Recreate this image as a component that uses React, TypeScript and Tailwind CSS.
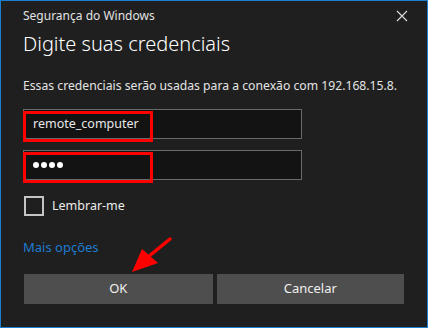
import React from "react";

function CloseIcon() {
  return (
    <svg width="12" height="12" viewBox="0 0 12 12" className="block">
      <path d="M1 1 L11 11 M11 1 L1 11" stroke="#d8d8d8" strokeWidth="1.2" />
    </svg>
  );
}

function Field({ children }: { children: React.ReactNode }) {
  return (
    <div className="relative w-[279px] h-[30px] bg-[#131313] border border-[#6a6a6a] flex items-center pl-[9px]">
      {children}
      {/* red highlight annotation */}
      <div className="absolute top-[1px] left-[-1px] w-[130px] h-[31px] border-[3px] border-[#ff0000]" />
    </div>
  );
}

export default function App() {
  return (
    <div
      className="relative w-[428px] h-[328px] bg-[#1f1f1f] border border-[#1b80d4] text-[#ececec] overflow-hidden"
      style={{ fontFamily: '"Noto Sans", "Open Sans", sans-serif' }}
    >
      <div className="pl-[22px] pr-[23px]">
        {/* title bar */}
        <div className="flex items-center justify-between mt-[7px] h-[16px]">
          <span className="text-[12px] leading-[16px] text-[#e2e2e2]">Segurança do Windows</span>
          <div className="mr-[-4px]">
            <CloseIcon />
          </div>
        </div>

        <div className="mt-[6px] text-[20px] leading-[28px] text-white font-light">Digite suas credenciais</div>

        <div className="mt-[20px] text-[12.2px] leading-[16px] text-[#e4e4e4]">
          Essas credenciais serão usadas para a conexão com 192.168.15.8.
        </div>

        <div className="mt-[15px]">
          <Field>
            <span className="text-[12.5px] text-[#e8e8e8]">remote_computer</span>
          </Field>
        </div>

        <div className="mt-[11px]">
          <Field>
            <span className="flex gap-[2px]">
              <span className="w-[6px] h-[6px] rounded-full bg-white" />
              <span className="w-[6px] h-[6px] rounded-full bg-white" />
              <span className="w-[6px] h-[6px] rounded-full bg-white" />
              <span className="w-[6px] h-[6px] rounded-full bg-white" />
            </span>
          </Field>
        </div>

        <div className="mt-[16px] flex items-center gap-[8px]">
          <div className="w-[20px] h-[20px] border-2 border-[#c4c4c4] ml-[1px]" />
          <span className="text-[12.5px] leading-[18px] text-[#ececec]">Lembrar-me</span>
        </div>

        <div className="mt-[22px] text-[13px] leading-[18px] text-[#1e7bd0]">Mais opções</div>

        <div className="mt-[18px] flex gap-[4px] ml-[1px]">
          <div className="w-[189px] h-[30px] bg-[#4e4e4e] flex items-center justify-center text-[13px] text-[#f0f0f0]">
            OK
          </div>
          <div className="w-[188px] h-[30px] bg-[#4e4e4e] flex items-center justify-center text-[13px] text-[#f0f0f0]">
            Cancelar
          </div>
        </div>
      </div>

      {/* red arrow annotation */}
      <svg className="absolute left-0 top-0 pointer-events-none" width="428" height="328">
        <line x1="169" y1="238" x2="147" y2="256" stroke="#ff0000" strokeWidth="3.5" strokeLinecap="round" />
        <polygon points="131,271 141,248 157,262" fill="#ff0000" />
      </svg>
    </div>
  );
}
